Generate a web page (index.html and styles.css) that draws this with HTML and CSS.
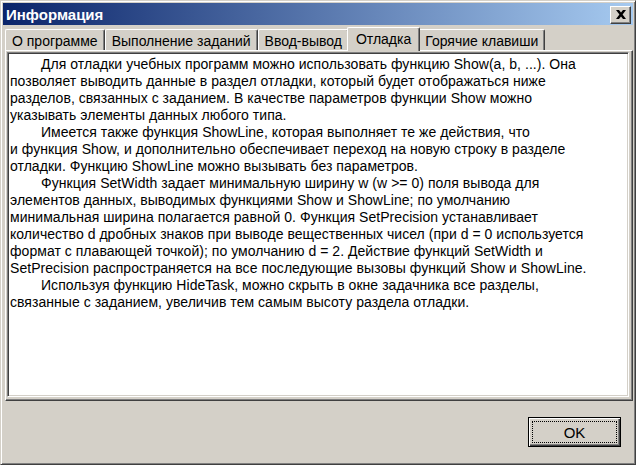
FILE: index.html
```html
<!DOCTYPE html>
<html>
  <head>
    <meta charset="utf-8" />
    <title>Информация</title>
    <link rel="stylesheet" href="styles.css">
  </head>
  <body>
    <div class="window">
      <div class="title-bar">
        <span class="title-text">Информация</span>
        <button class="close-btn" type="button">
          <svg width="10" height="9" viewBox="0 0 10 9">
            <path d="M0 0h3l2 2.6L7 0h3L6.6 4.5 10 9H7L5 6.4 3 9H0l3.4-4.5z" fill="#000" />
          </svg>
        </button>
      </div>

      <div class="tabs">
        <div class="tab">О программе</div>
        <div class="tab">Выполнение заданий</div>
        <div class="tab">Ввод-вывод</div>
        <div class="tab active">Отладка</div>
        <div class="tab">Горячие клавиши</div>
      </div>

      <div class="tab-panel">
        <div class="memo">
          <p>Для отладки учебных программ можно использовать функцию Show(a, b, ...). Она<br>позволяет выводить данные в раздел отладки, который будет отображаться ниже<br>разделов, связанных с заданием. В качестве параметров функции Show можно<br>указывать элементы данных любого типа.</p>
          <p>Имеется также функция ShowLine, которая выполняет те же действия, что<br>и функция Show, и дополнительно обеспечивает переход на новую строку в разделе<br>отладки. Функцию ShowLine можно вызывать без параметров.</p>
          <p>Функция SetWidth задает минимальную ширину w (w &gt;= 0) поля вывода для<br>элементов данных, выводимых функциями Show и ShowLine; по умолчанию<br>минимальная ширина полагается равной 0. Функция SetPrecision устанавливает<br>количество d дробных знаков при выводе вещественных чисел (при d = 0 используется<br>формат с плавающей точкой); по умолчанию d = 2. Действие функций SetWidth и<br>SetPrecision распространяется на все последующие вызовы функций Show и ShowLine.</p>
          <p>Используя функцию HideTask, можно скрыть в окне задачника все разделы,<br>связанные с заданием, увеличив тем самым высоту раздела отладки.</p>
        </div>
      </div>

      <div class="footer">
        <button class="ok-btn" type="button"><span class="ok-label">OK</span></button>
      </div>
    </div>
  </body>
</html>
```

FILE: styles.css
```css
body {
  margin: 0;
  background: #d4d0c8;
  font-family: "Liberation Sans", Arial, sans-serif;
  font-size: 14px;
  color: #000;
}

/* окно */
.window {
  width: 636px;
  height: 465px;
  box-sizing: border-box;
  border: 1px solid;
  border-color: #d4d0c8 #404040 #404040 #d4d0c8;
  box-shadow: inset 1px 1px #fff, inset -1px -1px #808080;
  padding: 2px;
  display: flex;
  flex-direction: column;
}

.title-bar {
  height: 22px;
  display: flex;
  align-items: center;
  justify-content: space-between;
  padding: 0 2px 0 3px;
  background: linear-gradient(to right, #0a246a, #a6caf0);
}

.title-text {
  color: #fff;
  font-weight: bold;
  font-size: 15px;
}

.close-btn {
  width: 21px;
  height: 18px;
  padding: 0;
  margin-top: 1px;
  display: flex;
  align-items: center;
  justify-content: center;
  background: #d4d0c8;
  border: 1px solid;
  border-color: #fff #404040 #404040 #fff;
  box-shadow: inset -1px -1px #808080;
}

/* вкладки */
.tabs {
  display: flex;
  align-items: flex-end;
  height: 23px;
  margin-top: 2px;
  padding-left: 2px;
}

.tab {
  height: 21px;
  box-sizing: border-box;
  padding: 3px 6px 0;
  line-height: 17px;
  border: 1px solid;
  border-bottom: none;
  border-color: #fff #404040 #404040 #fff;
  border-radius: 2px 2px 0 0;
  box-shadow: inset -1px 0 #808080;
  white-space: nowrap;
}

.tab.active {
  position: relative;
  z-index: 1;
  height: 24px;
  margin: 0 -2px -1px;
  padding: 3px 8px 0;
  background: #d4d0c8;
}

.tab-panel {
  height: 351px;
  box-sizing: border-box;
  margin-left: 2px;
  border: 1px solid;
  border-color: #fff #404040 #404040 #fff;
  box-shadow: inset -1px -1px #808080;
  padding: 1px 3px 3px 1px;
}

.memo {
  height: 100%;
  box-sizing: border-box;
  background: #fff;
  border: 1px solid;
  border-color: #808080 #fff #fff #808080;
  box-shadow: inset 1px 1px #404040, inset -1px -1px #d4d0c8;
  padding: 3px 2px;
  line-height: 17px;
  letter-spacing: 0.04px;
}

.memo p {
  margin: 0;
  text-indent: 31px;
  white-space: nowrap;
}

/* кнопка OK */
.footer {
  display: flex;
  justify-content: flex-end;
  padding: 16px 12px 0 0;
}

.ok-btn {
  width: 93px;
  height: 30px;
  padding: 3px;
  background: #d4d0c8;
  border: 1px solid #000;
  box-shadow: inset 1px 1px #fff, inset -1px -1px #404040, inset -2px -2px #808080;
  font-family: "Liberation Sans", Arial, sans-serif;
  font-size: 15px;
  color: #000;
}

.ok-label {
  display: flex;
  align-items: center;
  justify-content: center;
  height: 100%;
  border: 1px dotted #000;
  box-sizing: border-box;
}
```
